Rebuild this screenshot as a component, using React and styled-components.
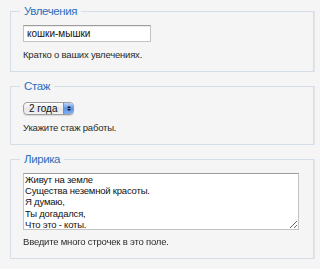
import React from 'react';
import styled, { createGlobalStyle } from 'styled-components';

const GlobalStyle = createGlobalStyle`
  html, body {
    margin: 0;
    padding: 0;
    background: #f5f5f5;
  }
  body {
    font-family: "Liberation Sans", Arial, sans-serif;
    color: #2a2a2a;
  }
`;

const Page = styled.div`
  display: flex;
  flex-direction: column;
  gap: 6px;
  padding: 3px 6px 0 10px;
`;

const Fieldset = styled.fieldset`
  margin: 0;
  padding: 6px 12px 9px 12px;
  border: 1px solid #d4dde8;
  box-shadow: 1px 0 0 #e3e5e8;
  display: flex;
  flex-direction: column;
  align-items: flex-start;
  min-width: 0;
`;

const Legend = styled.legend`
  margin-left: -3px;
  padding: 0 4px 0 4px;
  font-size: 11.5px;
  line-height: 16px;
  letter-spacing: -0.4px;
  color: #2c6fbd;
`;

const TextInput = styled.input`
  box-sizing: border-box;
  width: 128px;
  height: 17px;
  margin: 0;
  padding: 0 3px;
  border: 1px solid #c3c3c3;
  border-top-color: #9c9c9c;
  box-shadow: inset 0 1px 1px rgba(0, 0, 0, 0.08);
  background: #fff;
  font-family: "Liberation Sans", Arial, sans-serif;
  font-size: 10px;
  color: #111;
  outline: none;
`;

const Hint = styled.div`
  margin-top: ${p => p.gap || 6}px;
  font-size: 9.5px;
  line-height: 14px;
  letter-spacing: -0.2px;
  color: #2a2a2a;
`;

const SelectBox = styled.div`
  box-sizing: border-box;
  margin-top: 2px;
  display: flex;
  align-items: stretch;
  width: 51px;
  height: 13px;
  border: 1px solid #9e9e9e;
  border-radius: 4px;
  overflow: hidden;
  background: linear-gradient(#ffffff, #e6e6e6 55%, #f2f2f2);
  box-shadow: 0 1px 1px rgba(0, 0, 0, 0.12);
`;

const SelectText = styled.span`
  flex: 1;
  padding-left: 5px;
  font-size: 10px;
  line-height: 11px;
  color: #111;
`;

const Stepper = styled.span`
  width: 9px;
  display: flex;
  flex-direction: column;
  align-items: center;
  justify-content: center;
  gap: 1px;
  border-left: 1px solid #6c8fcf;
  background: linear-gradient(#b9d3f7, #5d94e6 50%, #7fb0f2);
`;

const Arrow = styled.span`
  width: 0;
  height: 0;
  border-left: 2px solid transparent;
  border-right: 2px solid transparent;
  ${p => (p.down ? 'border-top: 2px solid #111;' : 'border-bottom: 2px solid #111;')}
`;

const TextArea = styled.textarea`
  box-sizing: border-box;
  width: 276px;
  height: 57px;
  margin: 0;
  padding: 0 1px;
  border: 1px solid #c3c3c3;
  border-top-color: #9c9c9c;
  background: #fff;
  font-family: "Liberation Sans", Arial, sans-serif;
  font-size: 9.5px;
  line-height: 11.2px;
  letter-spacing: -0.2px;
  color: #111;
  outline: none;
`;

const lyrics = 'Живут на земле\nСущества неземной красоты.\nЯ думаю,\nТы догадался,\nЧто это - коты.';

export default function App() {
  return (
    <>
      <GlobalStyle />
      <Page>
        <Fieldset>
          <Legend>Увлечения</Legend>
          <TextInput defaultValue="кошки-мышки" />
          <Hint>Кратко о ваших увлечениях.</Hint>
        </Fieldset>
        <Fieldset>
          <Legend>Стаж</Legend>
          <SelectBox>
            <SelectText>2 года</SelectText>
            <Stepper>
              <Arrow />
              <Arrow down />
            </Stepper>
          </SelectBox>
          <Hint>Укажите стаж работы.</Hint>
        </Fieldset>
        <Fieldset>
          <Legend>Лирика</Legend>
          <TextArea defaultValue={lyrics} />
          <Hint gap={5}>Введите много строчек в это поле.</Hint>
        </Fieldset>
      </Page>
    </>
  );
}
